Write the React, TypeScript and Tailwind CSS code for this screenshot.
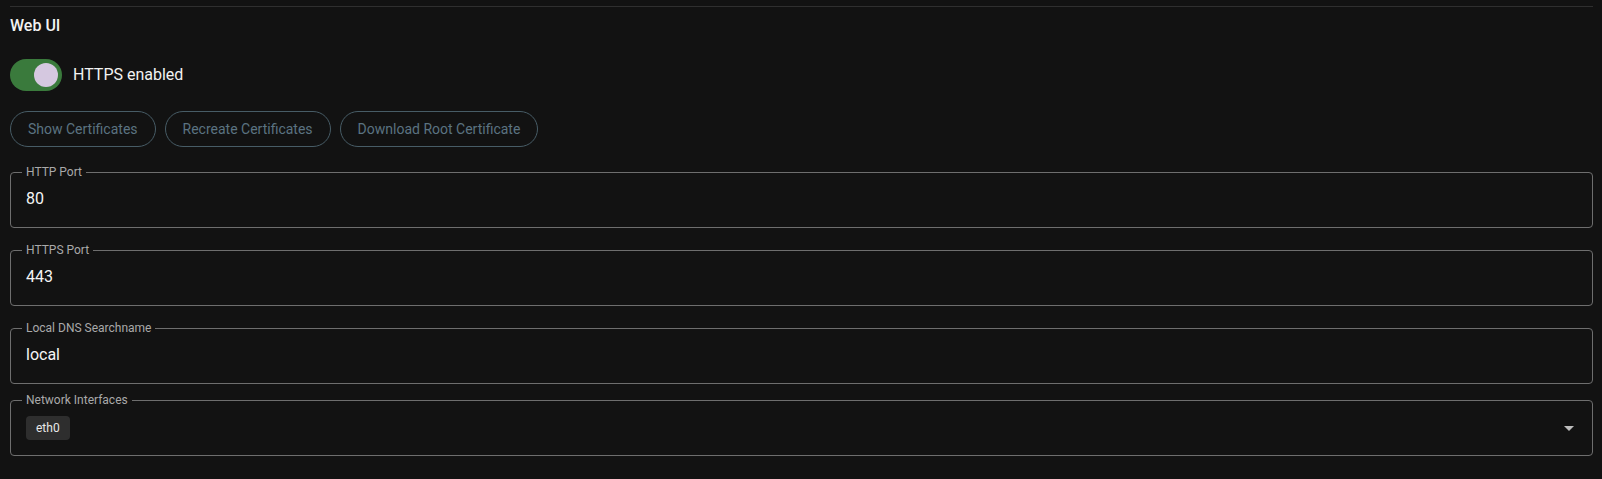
const fields = [
  { label: "HTTP Port", value: "80", gap: "mt-[17px]" },
  { label: "HTTPS Port", value: "443", gap: "mt-[14px]" },
  { label: "Local DNS Searchname", value: "local", gap: "mt-[14px]" },
];

const buttons = ["Show Certificates", "Recreate Certificates", "Download Root Certificate"];

function Field({ label, children, className }: { label: string; children: React.ReactNode; className?: string }) {
  return (
    <fieldset className={`rounded-[4px] border border-[#6e6e6e] ${className ?? ""}`}>
      <legend className="ml-[11px] px-1 text-[12px] leading-4 text-[#a9a9a9]">{label}</legend>
      {children}
    </fieldset>
  );
}

export default function App() {
  return (
    <div className="min-h-[479px] bg-[#121212] pl-[10px] pr-[9px] pt-[6px] font-['Roboto',sans-serif] text-[#f2f2f2]">
      <div className="h-px bg-[#2f2f2f]" />

      <h2 className="mt-[7px] text-[16px] font-medium leading-6">Web UI</h2>

      <div className="mt-[21px] flex items-center">
        <div className="flex h-[32px] w-[52px] items-center justify-end rounded-full bg-[#3a7a3c] pr-[4px]">
          <div className="h-[24px] w-[24px] rounded-full bg-[#d5c8e0]" />
        </div>
        <span className="ml-[11px] text-[16px] leading-6">HTTPS enabled</span>
      </div>

      <div className="mt-[20px] flex gap-[9px]">
        {buttons.map((b) => (
          <button
            key={b}
            className="h-[36px] rounded-full border border-[#475c66] px-[17px] text-[14px] text-[#5b7381]"
          >
            {b}
          </button>
        ))}
      </div>

      {fields.map((f) => (
        <Field key={f.label} label={f.label} className={f.gap}>
          <div className="h-[47px] pl-[15px] pt-[7px] text-[16px] leading-6 text-[#f5f5f5]">{f.value}</div>
        </Field>
      ))}

      <Field label="Network Interfaces" className="mt-[8px]">
        <div className="flex h-[47px] items-start justify-between pl-[15px] pr-[11px] pt-[8px]">
          <span className="flex h-[24px] items-center rounded-[4px] bg-[#2e2e2e] px-[10px] text-[12px] text-[#e8e8e8]">
            eth0
          </span>
          <svg viewBox="0 0 24 24" className="h-6 w-6 fill-[#bdbdbd]">
            <path d="M7,10L12,15L17,10H7Z" />
          </svg>
        </div>
      </Field>
    </div>
  );
}
